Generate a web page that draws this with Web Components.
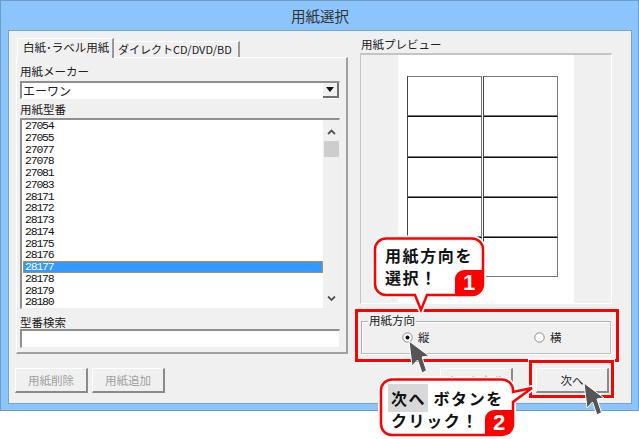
<!DOCTYPE html>
<html lang="ja">
<head>
<meta charset="utf-8">
<title>用紙選択</title>
<style>
  html, body { margin: 0; background: #fff; }
  body { width: 639px; height: 439px; position: relative; overflow: hidden; color: #222;
         font: 12px/14px "Noto Sans CJK JP", "Liberation Sans", sans-serif; }
</style>
</head>
<body>
<dialog-window caption="用紙選択">
  <paper-tabs slot="left">
    <field-label class="first">用紙メーカー</field-label>
    <combo-box value="エーワン"></combo-box>
    <field-label>用紙型番</field-label>
    <list-box selected="28177"></list-box>
    <field-label class="search">型番検索</field-label>
    <text-box></text-box>
  </paper-tabs>
  <button-row slot="left">
    <push-button disabled>用紙削除</push-button>
    <push-button disabled>用紙追加</push-button>
  </button-row>

  <field-label slot="right" class="preview">用紙プレビュー</field-label>
  <paper-preview slot="right"></paper-preview>
  <group-box slot="right" caption="用紙方向">
    <radio-option checked>縦</radio-option>
    <radio-option>横</radio-option>
  </group-box>
  <button-row slot="right" class="end">
    <push-button>キャンセル</push-button>
    <push-button>次へ</push-button>
  </button-row>
</dialog-window>

<red-frame style="left:355px;top:309px;width:264px;height:53px"></red-frame>
<red-frame style="left:529px;top:360px;width:85px;height:38px"></red-frame>

<call-out number="1" style="left:368px;top:232px;width:122px;height:84px"
  shape="M18 6.500H104a11 11 0 0 1 11 11V52a11 11 0 0 1-11 11H59L53 78L47 63H18a11 11 0 0 1-11-11V17.500a11 11 0 0 1 11-11Z"
  text-x="17" text-y="12">
  用紙方向を<br>選択！
</call-out>
<call-out number="2" style="left:374px;top:372px;width:166px;height:67px"
  shape="M18 7.500H128a11 11 0 0 1 11 11V20L158 16L139 30V52a11 11 0 0 1-11 11H18a11 11 0 0 1-11-11V18.500a11 11 0 0 1 11-11Z"
  text-x="17" text-y="15">
  <span style="background:#d8d8d8;padding:2px 2px 2px 3px;margin-left:-3px">次へ</span> ボタンを<br>クリック！
</call-out>

<mouse-cursor style="left:408px;top:340px"></mouse-cursor>
<mouse-cursor style="left:583px;top:382px"></mouse-cursor>

<script>
function shadow(el, html) {
  el.attachShadow({ mode: 'open' }).innerHTML = html;
}

class DialogWindow extends HTMLElement {
  connectedCallback() {
    shadow(this, `<style>
      :host { display: block; width: 639px; height: 411px; box-sizing: border-box; background: #8bc5fb;
              border: 1px solid #6f9cc6; padding: 0 6px 6px 7px; }
      .title { height: 29px; display: flex; align-items: center; justify-content: center;
               font-size: 14.500px; color: #333; padding-top: 1px; box-sizing: border-box; }
      .body { height: 374px; box-sizing: border-box; background: #f0f0f0; border: 1px solid #76a4cf;
              padding: 7px 19px 0 6px;
              display: grid; grid-template-columns: 333px 252px; column-gap: 12px; }
      .col { display: flex; flex-direction: column; }
    </style>
    <div class="title">${this.getAttribute('caption')}</div>
    <div class="body">
      <div class="col"><slot name="left"></slot></div>
      <div class="col"><slot name="right"></slot></div>
    </div>`);
  }
}

class PaperTabs extends HTMLElement {
  connectedCallback() {
    shadow(this, `<style>
      :host { display: block; height: 316px; }
      .tabs { display: flex; align-items: flex-end; height: 19px; margin-left: 2px; }
      .tab { font-size: 11.500px; line-height: 14px; white-space: nowrap; }
      .on { width: 97px; height: 20px; box-sizing: border-box; padding: 1px 0 0 5px; background: #f0f0f0;
            border-top: 1px solid #fff; border-left: 1px solid #fff; border-right: 2px solid #999;
            margin-bottom: -1px; position: relative; z-index: 1; }
      .off { width: 126px; height: 16px; box-sizing: border-box; padding: 0 0 0 4px;
             border-top: 1px solid #fff; border-right: 2px solid #999; font-size: 11px; }
      .panel { height: 297px; width: 332px; margin-left: 1px; box-sizing: border-box; padding: 6px 6px 0 3px;
               border: 1px solid #fff; border-right: 2px solid #a0a0a0; border-bottom: 2px solid #a0a0a0; }
    </style>
    <div class="tabs"><div class="tab on">白紙･ラベル用紙</div><div class="tab off">ダイレクトCD/DVD/BD</div></div>
    <div class="panel"><slot></slot></div>`);
  }
}

class FieldLabel extends HTMLElement {
  connectedCallback() {
    const kind = ['first', 'preview', 'search'].find(c => this.classList.contains(c)) || 'plain';
    const box = {
      first: 'height: 17px;',
      plain: 'height: 16px;',
      search: 'height: 14px; margin-top: 6px;',
      preview: 'height: 15px; line-height: 12px; padding-left: 1px;'
    }[kind];
    shadow(this, `<style>
      :host { display: block; font-size: 11.500px; line-height: 14px; white-space: nowrap; ${box} }
    </style><slot></slot>`);
  }
}

class ComboBox extends HTMLElement {
  connectedCallback() {
    shadow(this, `<style>
      :host { display: flex; justify-content: space-between; height: 18px; width: 320px; box-sizing: border-box;
              background: #fff; border: 2px solid #8f8f8f; border-right: 1px solid #eee; border-bottom: 1px solid #fff;
              margin-bottom: 3px; }
      .v { font-size: 12px; line-height: 15px; padding-left: 1px; }
      .b { width: 16px; height: 15px; box-sizing: border-box; background: #f0f0f0;
           border-right: 2px solid #707070; border-bottom: 2px solid #707070; display: flex; align-items: center; justify-content: center; }
    </style>
    <span class="v">${this.getAttribute('value')}</span>
    <span class="b"><svg width="8" height="5" viewBox="0 0 8 5"><path d="M0 0H8L4 5Z" fill="#111"/></svg></span>`);
  }
}

const PAPER_CODES = ['27054','27055','27077','27078','27081','27083','28171','28172','28173','28174',
  '28175','28176','28177','28178','28179','28180','28181'];

class ListBox extends HTMLElement {
  connectedCallback() {
    const sel = this.getAttribute('selected');
    const rows = PAPER_CODES.map(c => `<div class="row${c === sel ? ' sel' : ''}">${c}</div>`).join('');
    shadow(this, `<style>
      :host { display: flex; width: 320px; height: 191px; box-sizing: border-box; background: #fff;
              border: 2px solid #8f8f8f; border-right: 1px solid #eee; border-bottom: 1px solid #eee; }
      .rows { flex: 1; height: 188px; overflow: hidden; padding-left: 1px; box-sizing: border-box; }
      .row { height: 11.750px; padding-left: 2px;
             font: 11.500px/11.250px "Liberation Mono", monospace; letter-spacing: -1.200px; color: #111; }
      .row:last-child { margin-top: -2px; }
      .sel { background: #3399ff; color: #fff; box-shadow: inset 0 0 0 1px #8a8f80;
             outline: 1px dotted #e08a20; outline-offset: -1px; }
      .bar { width: 16px; background: #f0f0f0; display: flex; flex-direction: column; align-items: center; }
      .thumb { width: 15px; height: 16px; background: #cdcdcd; margin-top: 3px; }
      svg { display: block; }
      .up { margin-top: 6px; height: 12px; }
      .down { margin-top: auto; margin-bottom: 6px; }
    </style>
    <div class="rows">${rows}</div>
    <div class="bar">
      <svg class="up" width="9" height="7" viewBox="0 0 9 7"><path d="M1 5.500L4.500 2L8 5.500" fill="none" stroke="#555" stroke-width="1.800"/></svg>
      <div class="thumb"></div>
      <svg class="down" width="9" height="7" viewBox="0 0 9 7"><path d="M1 1.500L4.500 5L8 1.500" fill="none" stroke="#555" stroke-width="1.800"/></svg>
    </div>`);
  }
}

class TextBox extends HTMLElement {
  connectedCallback() {
    shadow(this, `<style>
      :host { display: block; width: 320px; height: 19px; box-sizing: border-box; background: #fff;
              border: 2px solid #8f8f8f; border-right: 1px solid #eee; border-bottom: 1px solid #eee; }
    </style>`);
  }
}

class ButtonRow extends HTMLElement {
  connectedCallback() {
    const end = this.classList.contains('end');
    shadow(this, `<style>
      :host { display: flex; gap: ${end ? 23 : 4}px; margin-top: 14px;
              justify-content: ${end ? 'flex-end' : 'flex-start'}; padding-right: ${end ? 3 : 0}px; }
    </style><slot></slot>`);
  }
}

class PushButton extends HTMLElement {
  connectedCallback() {
    const off = this.hasAttribute('disabled');
    shadow(this, `<style>
      :host { display: flex; align-items: center; justify-content: center; width: 73px; height: 25px;
              box-sizing: border-box; background: #f0f0f0; border: 1px solid #fff;
              border-right: 2px solid #8a8a8a; border-bottom: 2px solid #8a8a8a;
              font-size: 11.500px; color: ${off ? '#a0a0a0' : '#222'}; white-space: nowrap; }
    </style><slot></slot>`);
  }
}

class PaperPreview extends HTMLElement {
  connectedCallback() {
    const cells = Array.from({ length: 10 }, (_, i) => `<i class="${i < 2 ? 'top' : ''}"></i>`).join('');
    shadow(this, `<style>
      :host { display: block; height: 251px; box-sizing: border-box; padding: 0 37px;
              border-top: 2px solid #c4c4c4; border-left: 1px solid #c4c4c4; border-right: 1px solid #fff; border-bottom: 1px solid #fff; }
      .paper { height: 248px; background: #fff; padding: 21px 0 0 9px; box-sizing: border-box; }
      .sheet { display: grid; grid-template-columns: 75px 75px; column-gap: 1px; width: 151px; }
      i { display: block; height: 40.250px; box-sizing: border-box; border: 1px solid #777;
          border-top: 1.500px solid #111; border-left-color: #444; }
      i.top { border-top: 1px solid #777; }
    </style>
    <div class="paper"><div class="sheet">${cells}</div></div>`);
  }
}

class GroupBox extends HTMLElement {
  connectedCallback() {
    shadow(this, `<style>
      :host { display: block; position: relative; width: 250px; height: 33px; margin: 17px 0 0 1px; box-sizing: border-box;
              border: 1px solid #b0b0b0; border-right-color: #c0c0c0; border-bottom-color: #c0c0c0;
              box-shadow: inset 1px 1px 0 #fff, 1px 1px 0 #fff; }
      .cap { position: absolute; left: 6px; top: -9px; background: #f0f0f0; padding: 0 1px; font-size: 11.500px; line-height: 14px; white-space: nowrap; }
      .opts { display: grid; grid-template-columns: 132px 1fr; padding: 8px 0 0 40px; }
    </style>
    <div class="cap">${this.getAttribute('caption')}</div>
    <div class="opts"><slot></slot></div>`);
  }
}

class RadioOption extends HTMLElement {
  connectedCallback() {
    const dot = this.hasAttribute('checked') ? '<circle cx="5.500" cy="5.500" r="2" fill="#111"/>' : '';
    shadow(this, `<style>
      :host { display: flex; align-items: center; gap: 5px; height: 14px; font-size: 11.500px; }
      svg { display: block; }
    </style>
    <svg width="11" height="11" viewBox="0 0 11 11"><circle cx="5.500" cy="5.500" r="4.700" fill="#fff" stroke="#8c8c8c"/>${dot}</svg>
    <slot></slot>`);
  }
}

class RedFrame extends HTMLElement {
  connectedCallback() {
    shadow(this, `<style>
      :host { display: block; position: absolute; box-sizing: border-box; border: 3px solid #ff0000;
              box-shadow: 0 0 0 1px #fff, inset 0 0 0 1px rgba(255,255,255,.7); }
    </style>`);
  }
}

class CallOut extends HTMLElement {
  connectedCallback() {
    const w = parseInt(this.style.width), h = parseInt(this.style.height);
    const n = this.getAttribute('number');
    const x = this.getAttribute('text-x'), y = this.getAttribute('text-y');
    shadow(this, `<style>
      :host { display: block; position: absolute; }
      svg { position: absolute; left: 0; top: 0; }
      .txt { position: absolute; left: ${x}px; top: ${y}px; font-size: 16px; line-height: 22px; font-weight: 700;
             letter-spacing: 1.600px; color: #111; white-space: nowrap; }
      .num { position: absolute; right: ${n === '1' ? 7 : 27}px; bottom: ${n === '1' ? 21 : 4}px; width: 28px; height: 25px; background: #f00;
             border-radius: 9px 0 11px 0; color: #fff; font: 700 22px/26px "Liberation Sans", sans-serif; text-align: center; }
    </style>
    <svg width="${w}" height="${h}" viewBox="0 0 ${w} ${h}">
      <path d="${this.getAttribute('shape')}" fill="#fff" stroke="#fff" stroke-width="6" stroke-linejoin="round"/>
      <path d="${this.getAttribute('shape')}" fill="#fff" stroke="#f00" stroke-width="2.500" stroke-linejoin="miter"/>
    </svg>
    <div class="txt"><slot></slot></div>
    <div class="num">${n}</div>`);
  }
}

class MouseCursor extends HTMLElement {
  connectedCallback() {
    shadow(this, `<style>
      :host { display: block; position: absolute; width: 24px; height: 36px; }
    </style>
    <svg width="24" height="36" viewBox="0 0 24 36">
      <path d="M1 1L4 26L9.500 20L14 33L18.500 30.500L14 17L21 16Z" fill="#555" stroke="#fff" stroke-width="1" stroke-linejoin="round"/>
    </svg>`);
  }
}

customElements.define('dialog-window', DialogWindow);
customElements.define('paper-tabs', PaperTabs);
customElements.define('field-label', FieldLabel);
customElements.define('combo-box', ComboBox);
customElements.define('list-box', ListBox);
customElements.define('text-box', TextBox);
customElements.define('button-row', ButtonRow);
customElements.define('push-button', PushButton);
customElements.define('paper-preview', PaperPreview);
customElements.define('group-box', GroupBox);
customElements.define('radio-option', RadioOption);
customElements.define('red-frame', RedFrame);
customElements.define('call-out', CallOut);
customElements.define('mouse-cursor', MouseCursor);
</script>
</body>
</html>
